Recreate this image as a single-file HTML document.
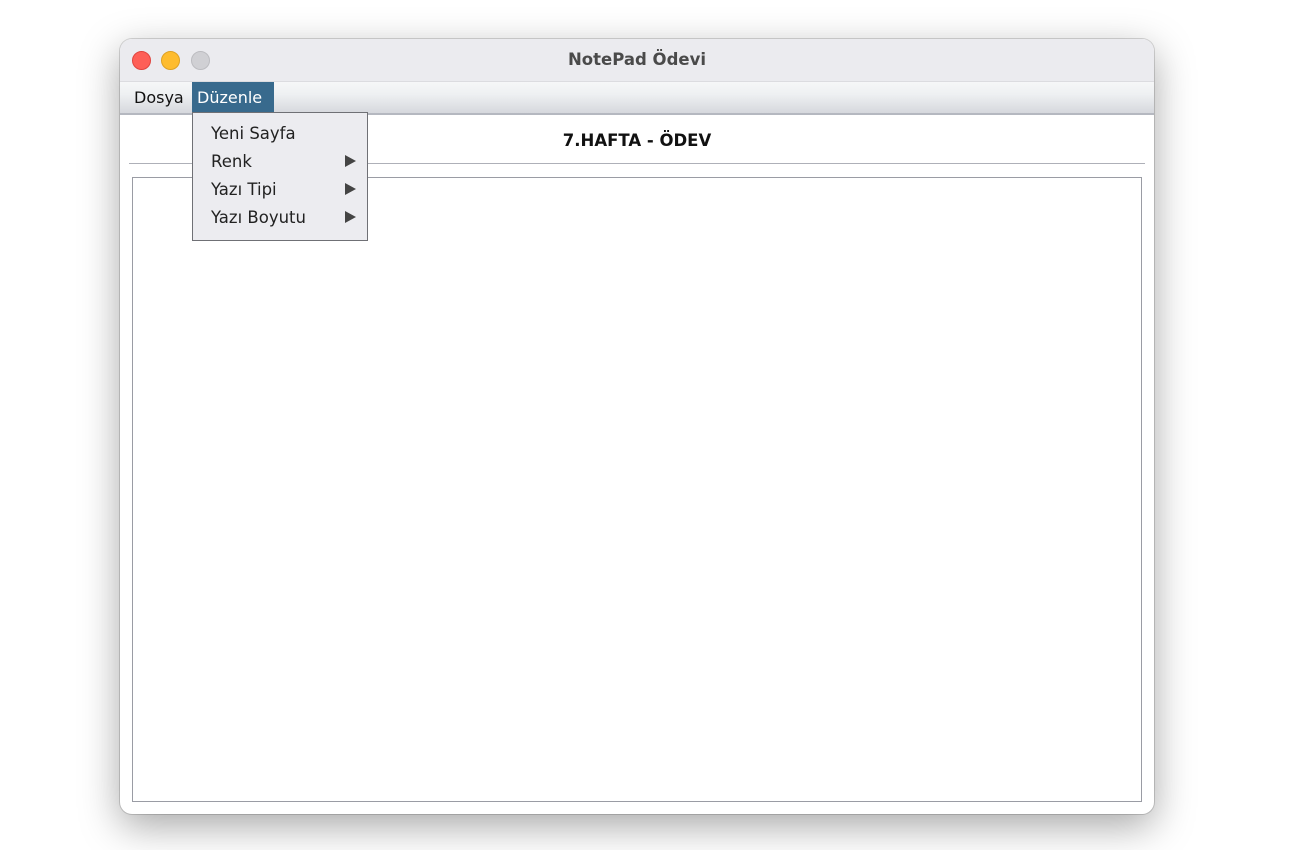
<!DOCTYPE html>
<html><head><style>
body{margin:0;width:1300px;height:850px;background:#fff;position:relative;font-family:"DejaVu Sans","Liberation Sans",sans-serif;overflow:hidden}
.win{position:absolute;left:120px;top:39px;width:1034px;height:775px;border-radius:12px;background:#fff;box-shadow:0 12px 40px rgba(0,0,0,.35),0 0 0 1px rgba(0,0,0,.15);overflow:hidden}
.title{height:42px;background:#ebebef;border-bottom:1px solid #dcdce0;text-align:center;line-height:41px;font-weight:bold;font-size:16.5px;color:#4a4a4a}
.dot{position:absolute;top:12px;width:17px;height:17px;border-radius:50%}
.menubar{position:absolute;top:43px;left:0;right:0;height:31px;background:linear-gradient(#f6f7f8,#eef0f2 40%,#d6d8dd);border-bottom:2px solid #b5b8c0}
.mi{position:absolute;top:0;height:30px;line-height:31px;font-size:16px;color:#111;padding:0 5px}
.sep{position:absolute;left:9px;right:9px;top:124px;height:1px;background:#aeb0b8}
.ta{position:absolute;left:12px;top:138px;width:1008px;height:623px;border:1px solid #9a9ca4}
.head{position:absolute;top:92px;left:0;right:0;text-align:center;font-weight:bold;font-size:16.5px;color:#111}
.pop{position:absolute;left:72px;top:73px;width:174px;height:127px;background:#ececf0;border:1px solid #6f7075}
.pi{position:absolute;left:18px;font-size:16.5px;color:#222}
.ar{position:absolute;left:152px;width:0;height:0;border-top:6px solid transparent;border-bottom:6px solid transparent;border-left:11px solid #444}
</style></head><body>
<div class="win">
<div class="title">NotePad Ödevi</div>
<div class="dot" style="left:12px;background:#fe5f57;border:0.5px solid #e0443e"></div>
<div class="dot" style="left:41px;background:#febc2e;border:0.5px solid #dea123"></div>
<div class="dot" style="left:71px;background:#d0d0d4;border:0.5px solid #bcbcc0"></div>
<div class="menubar">
<div class="mi" style="left:9px">Dosya</div>
<div class="mi" style="left:72px;width:72px;background:#386a8d;color:#fff">Düzenle</div>
</div>
<div class="head">7.HAFTA - ÖDEV</div>
<div class="sep"></div>
<div class="ta"></div>
<div class="pop">
<div class="pi" style="top:11px">Yeni Sayfa</div>
<div class="pi" style="top:39px">Renk</div><div class="ar" style="top:42px"></div>
<div class="pi" style="top:67px">Yazı Tipi</div><div class="ar" style="top:70px"></div>
<div class="pi" style="top:95px">Yazı Boyutu</div><div class="ar" style="top:98px"></div>
</div>
</div>
</body></html>
